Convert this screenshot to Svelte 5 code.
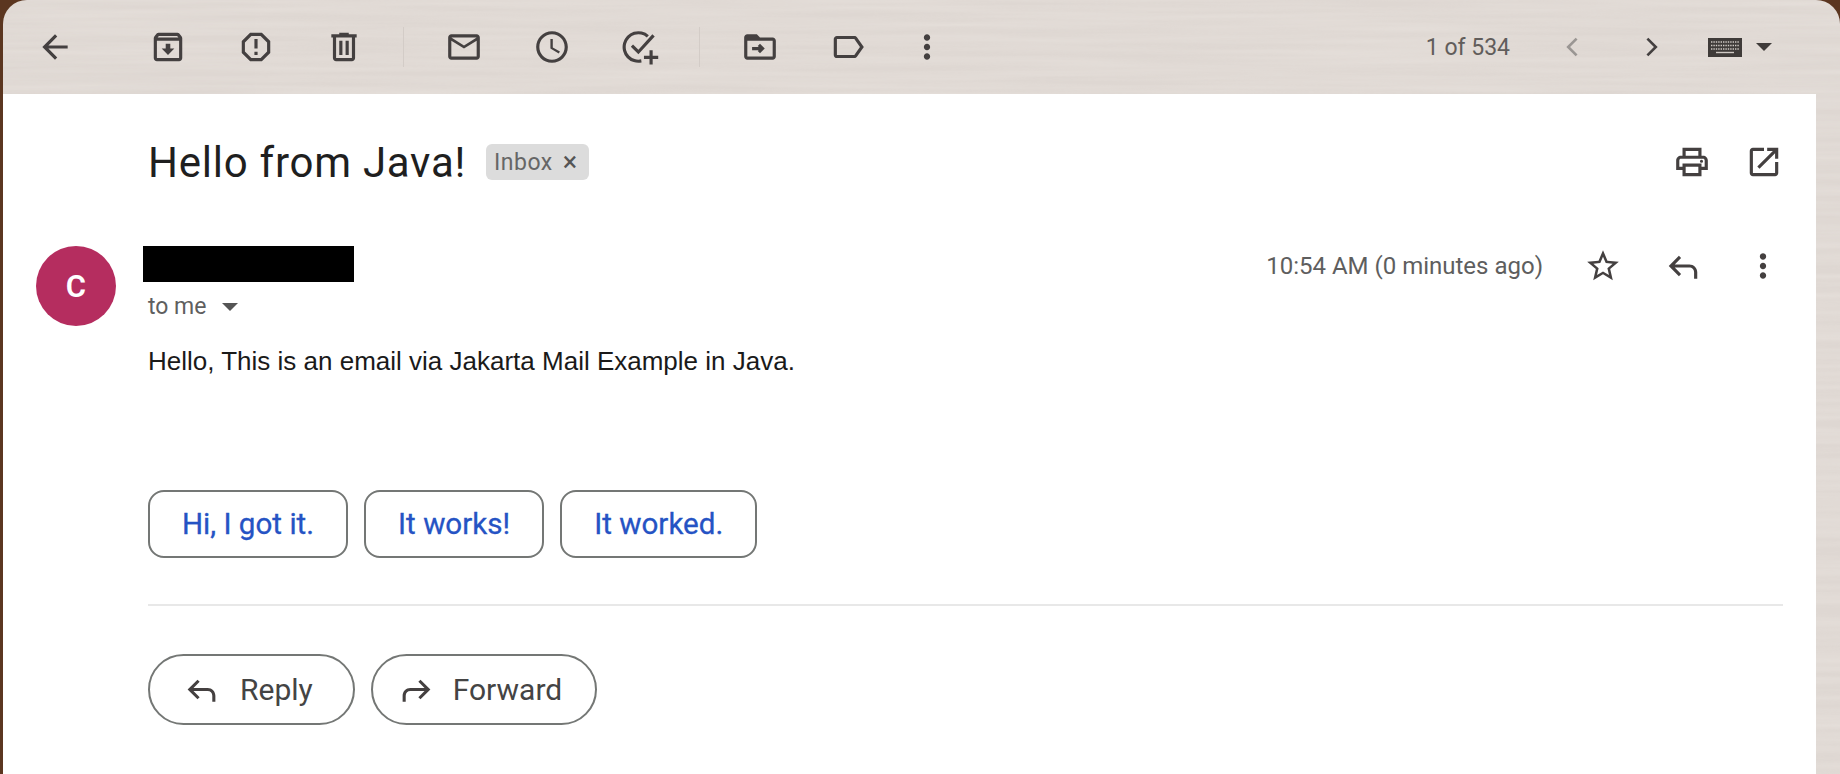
<script>
  // Material icon paths used through the page
  const icons = {
    back: 'M20 11H7.83l5.59-5.59L12 4l-8 8 8 8 1.41-1.41L7.83 13H20v-2z',
    archive: 'M20.54 5.23l-1.39-1.68C18.88 3.21 18.47 3 18 3H6c-.47 0-.88.21-1.16.55L3.46 5.23C3.17 5.57 3 6.02 3 6.5V19c0 1.1.9 2 2 2h14c1.1 0 2-.9 2-2V6.5c0-.48-.17-.93-.46-1.27zM6.24 5h11.52l.81.97H5.44l.8-.97zM5 19V8h14v11H5zm8.45-9h-2.9v3H8l4 4 4-4h-2.55z',
    spam: 'M15.73 3H8.27L3 8.27v7.46L8.27 21h7.46L21 15.73V8.27L15.73 3zM19 14.9L14.9 19H9.1L5 14.9V9.1L9.1 5h5.8L19 9.1v5.8zM11 7h2v6h-2zM11 15h2v2h-2z',
    trash: 'M15 4V3H9v1H4v2h1v13c0 1.1.9 2 2 2h10c1.1 0 2-.9 2-2V6h1V4h-5zm2 15H7V6h10v13zM9 8h2v9H9zm4 0h2v9h-2z',
    mail: 'M20 4H4c-1.1 0-2 .9-2 2v12c0 1.1.9 2 2 2h16c1.1 0 2-.9 2-2V6c0-1.1-.9-2-2-2zm0 14H4V8l8 5 8-5v10zm-8-7L4 6h16l-8 5z',
    clock: 'M11.99 2C6.47 2 2 6.48 2 12s4.47 10 9.99 10C17.52 22 22 17.52 22 12S17.52 2 11.99 2zM12 20c-4.42 0-8-3.58-8-8s3.58-8 8-8 8 3.58 8 8-3.58 8-8 8zm.5-13H11v6l5.25 3.15.75-1.23-4.5-2.67z',
    task: 'M17.6 4.5A10 10 0 1 0 13 21.8l-.3-2A8 8 0 1 1 16.3 6zM19.8 4L11 13.8l-3.4-3.4-1.4 1.4 4.8 4.8L21.3 5.3zM18 14v3.5h-3.5v2H18V23h2v-3.5h3.5v-2H20V14z',
    move: 'M20 6h-8l-2-2H4c-1.1 0-2 .9-2 2v12c0 1.1.9 2 2 2h16c1.1 0 2-.9 2-2V8c0-1.1-.9-2-2-2zm0 12H4V8h16v10zM12 10l-1.4 1.4.6.6H7v2h4.2l-.6.6L12 16l3-3z',
    label: 'M17.63 5.84C17.27 5.33 16.67 5 16 5L5 5.01C3.9 5.01 3 5.9 3 7v10c0 1.1.9 1.99 2 1.99L16 19c.67 0 1.27-.33 1.63-.84L22 12l-4.37-6.16zM16 17H5V7h11l3.55 5L16 17z',
    more: 'M12 8c1.1 0 2-.9 2-2s-.9-2-2-2-2 .9-2 2 .9 2 2 2zm0 2c-1.1 0-2 .9-2 2s.9 2 2 2 2-.9 2-2-.9-2-2-2zm0 6c-1.1 0-2 .9-2 2s.9 2 2 2 2-.9 2-2-.9-2-2-2z',
    prev: 'M15.4 6.4L14 5l-7 7 7 7 1.4-1.4L9.8 12z',
    next: 'M8.6 6.4L10 5l7 7-7 7-1.4-1.4 5.6-5.6z',
    print: 'M19 8h-1V3H6v5H5c-1.66 0-3 1.34-3 3v6h4v4h12v-4h4v-6c0-1.66-1.34-3-3-3zM8 5h8v3H8V5zm8 12v2H8v-4h8v2zm2-2v-2H6v2H4v-4c0-.55.45-1 1-1h14c.55 0 1 .45 1 1v4h-2zM18 10.5a1 1 0 1 0 0 2 1 1 0 0 0 0-2z',
    open: 'M19 19H5V5h7V3H5c-1.11 0-2 .9-2 2v14c0 1.1.89 2 2 2h14c1.1 0 2-.9 2-2v-7h-2v7zM14 3v2h3.59l-9.83 9.83 1.41 1.41L19 6.41V10h2V3h-7z',
    star: 'M22 9.24l-7.19-.62L12 2 9.19 8.63 2 9.24l5.46 4.73L5.82 21 12 17.27 18.18 21l-1.63-7.03L22 9.24zM12 15.4l-3.76 2.27 1-4.28-3.32-2.88 4.38-.38L12 6.1l1.71 4.04 4.38.38-3.32 2.88 1 4.28L12 15.4z',
    reply: 'M9.4 5.6L3 12l6.4 6.4 1.4-1.4-4-4H16c1.7 0 3 1.3 3 3v4h2v-4c0-2.8-2.2-5-5-5H6.8l4-4z',
    forward: 'M14.6 5.6L21 12l-6.4 6.4-1.4-1.4 4-4H8c-1.7 0-3 1.3-3 3v4H3v-4c0-2.8 2.2-5 5-5h9.2l-4-4z'
  };

  const leftGroups = [
    ['archive', 'spam', 'trash'],
    ['mail', 'clock', 'task'],
    ['move', 'label']
  ];

  const suggestions = ['Hi, I got it.', 'It works!', 'It worked.'];
</script>

{#snippet icon(name, cls = '')}
  <svg class="icon {cls}" viewBox="0 0 24 24" aria-hidden="true"><path d={icons[name]} /></svg>
{/snippet}

<div class="window">
  <svg class="grain" aria-hidden="true">
    <filter id="streaks">
      <feTurbulence type="fractalNoise" baseFrequency="0.004 0.14" numOctaves="3" seed="7" />
      <feColorMatrix values="0 0 0 0 1  0 0 0 0 0.97  0 0 0 0 0.93  0.9 0 0 0 -0.22" />
    </filter>
    <rect width="100%" height="100%" filter="url(#streaks)" />
  </svg>

  <header class="toolbar">
    <button class="tool back">{@render icon('back')}</button>
    {#each leftGroups as group, i}
      {#if i > 0}<span class="sep"></span>{/if}
      {#each group as name}
        <button class="tool">{@render icon(name)}</button>
      {/each}
    {/each}
    <button class="tool narrow">{@render icon('more')}</button>

    <div class="paging">
      <span class="count">1 of 534</span>
      <button class="page-btn dim">{@render icon('prev')}</button>
      <button class="page-btn">{@render icon('next')}</button>
      <svg class="keyboard" viewBox="0 0 34 19" aria-hidden="true">
        <rect width="34" height="19" fill="#3f3b39" />
        <path d="M3 4h28M3 7.5h28M3 11h28" stroke="#cfc9c4" stroke-width="1.4" stroke-dasharray="1.4 1" />
        <path d="M8 14.5h18" stroke="#cfc9c4" stroke-width="1.4" />
      </svg>
      <span class="caret kb-caret"></span>
    </div>
  </header>

  <main class="panel">
    <div class="subject">
      <h1>Hello from Java!</h1>
      <span class="chip">Inbox <span class="chip-x">×</span></span>
      <div class="subject-actions">
        {@render icon('print')}
        {@render icon('open')}
      </div>
    </div>

    <div class="message">
      <div class="avatar">C</div>
      <div class="content">
        <div class="head">
          <div class="sender">
            <div class="redacted"></div>
            <div class="to">to me <span class="caret to-caret"></span></div>
          </div>
          <div class="meta">
            <span class="time">10:54 AM (0 minutes ago)</span>
            <span class="meta-btn">{@render icon('star')}</span>
            <span class="meta-btn">{@render icon('reply')}</span>
            <span class="meta-btn">{@render icon('more')}</span>
          </div>
        </div>

        <p class="body">Hello, This is an email via Jakarta Mail Example in Java.</p>

        <div class="suggestions">
          {#each suggestions as text}
            <button class="suggestion">{text}</button>
          {/each}
        </div>

        <hr />

        <div class="actions">
          <button class="action reply">{@render icon('reply')}Reply</button>
          <button class="action forward">{@render icon('forward')}Forward</button>
        </div>
      </div>
    </div>
  </main>
</div>

<style>
  :global(body) {
    background: #5b3620;
    font-family: Roboto, sans-serif;
    overflow: hidden;
  }

  .window {
    position: relative;
    margin-left: 3px;
    height: 100vh;
    display: flex;
    flex-direction: column;
    overflow: hidden;
    background: #ded7d2;
    border-radius: 24px 24px 0 0;
  }

  .grain {
    position: absolute;
    inset: 0;
    width: 100%;
    height: 100%;
    opacity: 0.35;
  }

  button {
    border: none;
    background: none;
    padding: 0;
    font: inherit;
    display: flex;
    align-items: center;
    justify-content: center;
  }

  .icon {
    width: 38px;
    height: 38px;
    fill: #444040;
    flex: none;
  }

  .toolbar {
    position: relative;
    height: 94px;
    display: flex;
    align-items: center;
    padding-left: 8px;
    flex: none;
  }

  .tool {
    width: 88px;
    height: 60px;
  }

  .tool.back {
    margin-right: 25px;
  }

  .tool.narrow {
    width: 72px;
    margin-left: -1px;
  }

  .sep {
    width: 1px;
    height: 40px;
    background: #d3ccc7;
    margin: 0 16px 0 15px;
  }

  .paging {
    margin-left: auto;
    display: flex;
    align-items: center;
  }

  .count {
    font-size: 23px;
    color: #615d5b;
    margin-right: 24px;
  }

  .page-btn {
    width: 78px;
  }

  .page-btn .icon {
    width: 32px;
    height: 32px;
  }

  .page-btn.dim .icon {
    fill: #9a9693;
  }

  .keyboard {
    width: 34px;
    height: 19px;
    margin-left: 18px;
  }

  .caret {
    display: block;
    width: 0;
    height: 0;
    border-left: 8px solid transparent;
    border-right: 8px solid transparent;
    border-top: 8px solid #3f3b39;
  }

  .kb-caret {
    margin: 0 68px 0 14px;
  }

  .panel {
    position: relative;
    flex: 1;
    margin-right: 24px;
    background: #fff;
  }

  .subject {
    display: flex;
    align-items: center;
    height: 46px;
    margin-top: 45px;
    padding: 0 33px 0 145px;
  }

  h1 {
    margin: 0;
    font-size: 42px;
    font-weight: 400;
    color: #1f1f1f;
    letter-spacing: 0.75px;
  }

  .chip {
    margin-left: 20px;
    height: 36px;
    padding: 0 11px 0 8px;
    display: flex;
    align-items: center;
    gap: 10px;
    background: #dcdcdc;
    border-radius: 6px;
    font-size: 23px;
    letter-spacing: 0.5px;
    color: #666;
  }

  .chip-x {
    font-size: 27px;
    line-height: 1;
    color: #555;
  }

  .subject-actions {
    margin-left: auto;
    display: flex;
    gap: 34px;
  }

  .message {
    display: flex;
    margin-top: 61px;
    padding: 0 33px;
  }

  .avatar {
    width: 80px;
    height: 80px;
    margin-right: 32px;
    flex: none;
    border-radius: 50%;
    background: #b52d5f;
    color: #fff;
    font-size: 31px;
    font-weight: 600;
    display: flex;
    align-items: center;
    justify-content: center;
  }

  .content {
    flex: 1;
    min-width: 0;
  }

  .head {
    display: flex;
    justify-content: space-between;
  }

  .redacted {
    width: 211px;
    height: 36px;
    margin-left: -5px;
    background: #000;
  }

  .to {
    margin-top: 11px;
    font-size: 23px;
    color: #5f5f5f;
    display: flex;
    align-items: center;
    gap: 15px;
  }

  .to-caret {
    border-top-color: #555;
  }

  .meta {
    display: flex;
    align-items: center;
    height: 40px;
    margin-right: -20px;
  }

  .time {
    font-size: 24px;
    color: #5e5e5e;
    margin-right: 20px;
  }

  .meta-btn {
    width: 80px;
    display: flex;
    justify-content: center;
  }

  .body {
    margin: 25px 0 0;
    font-family: "Liberation Sans", Arial, sans-serif;
    font-size: 26px;
    line-height: 32px;
    color: #1a1a1a;
  }

  .suggestions {
    display: flex;
    gap: 16px;
    margin-top: 113px;
  }

  .suggestion {
    height: 68px;
    padding: 0 32px;
    border: 2px solid #747775;
    border-radius: 16px;
    background: #fff;
    font-size: 29.6px;
    font-weight: 400;
    -webkit-text-stroke: 0.3px #2553c4;
    color: #2553c4;
  }

  hr {
    margin: 46px 0 48px;
    border: none;
    border-top: 2px solid #e8e8e8;
  }

  .actions {
    display: flex;
    gap: 16px;
  }

  .action {
    height: 71px;
    border: 2px solid #747775;
    border-radius: 36px;
    background: #fff;
    font-size: 30px;
    color: #444;
  }

  .action.reply {
    padding: 0 40px 0 33px;
    gap: 20px;
  }

  .action.forward {
    padding: 0 33px 0 25px;
    gap: 18px;
  }

  .action .icon {
    width: 37px;
    height: 37px;
  }
</style>
